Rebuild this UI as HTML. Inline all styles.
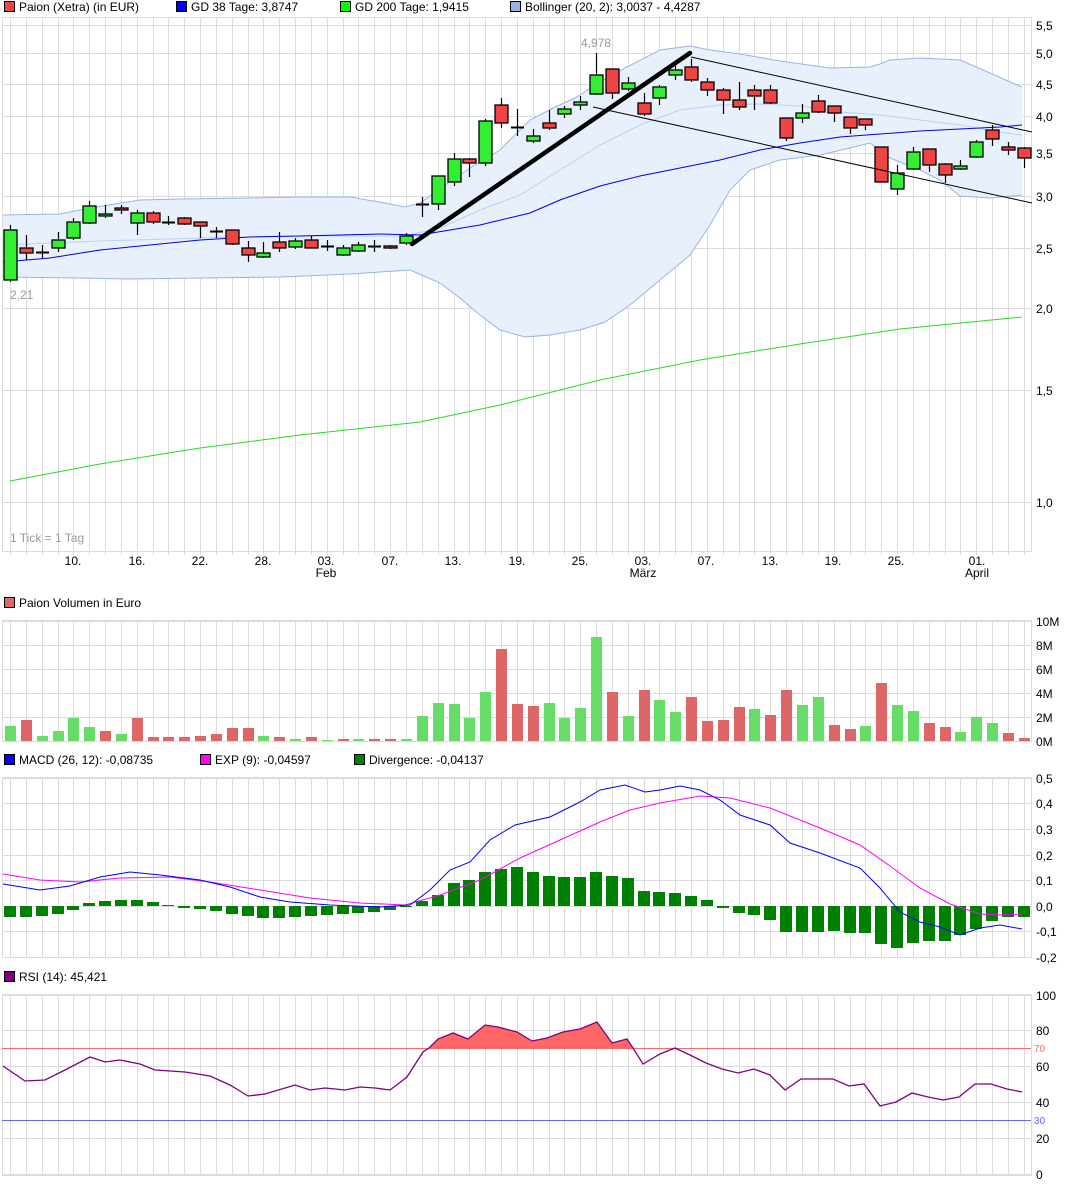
<!DOCTYPE html>
<html><head><meta charset="utf-8">
<style>
html,body{margin:0;padding:0;background:#fff;}
svg{display:block;font-family:"Liberation Sans",sans-serif;}
.t{font-size:12px;fill:#000;}
.a{font-size:12px;fill:#000;}
.g{font-size:12px;fill:#999;}
</style></head>
<body>
<svg id="s" width="1089" height="1188" viewBox="0 0 1089 1188" xmlns="http://www.w3.org/2000/svg">
<g id="grid"></g>
<g id="draw"></g>
<!-- legends -->
<rect x="4.5" y="1.5" width="10" height="10" fill="#ee4444" stroke="#000"/>
<text class="t" x="19" y="11">Paion (Xetra) (in EUR)</text>
<rect x="176.5" y="1.5" width="10" height="10" fill="#0000ff" stroke="#000"/>
<text class="t" x="191" y="11">GD 38 Tage: 3,8747</text>
<rect x="340.5" y="1.5" width="10" height="10" fill="#00ff00" stroke="#000"/>
<text class="t" x="355" y="11">GD 200 Tage: 1,9415</text>
<rect x="510.5" y="1.5" width="10" height="10" fill="#99b3e6" stroke="#000"/>
<text class="t" x="525" y="11">Bollinger (20, 2): 3,0037 - 4,4287</text>

<rect x="4.5" y="597.5" width="10" height="10" fill="#dd6666" stroke="#000"/>
<text class="t" x="19" y="607">Paion Volumen in Euro</text>

<rect x="4.5" y="754.5" width="10" height="10" fill="#0000ff" stroke="#000"/>
<text class="t" x="19" y="764">MACD (26, 12): -0,08735</text>
<rect x="200.5" y="754.5" width="10" height="10" fill="#ff00ff" stroke="#000"/>
<text class="t" x="215" y="764">EXP (9): -0,04597</text>
<rect x="354.5" y="754.5" width="10" height="10" fill="#008000" stroke="#000"/>
<text class="t" x="369" y="764">Divergence: -0,04137</text>

<rect x="4.5" y="971.5" width="10" height="10" fill="#800080" stroke="#000"/>
<text class="t" x="19" y="981">RSI (14): 45,421</text>

<!-- price axis -->
<text class="a" x="1036" y="30">5,5</text>
<text class="a" x="1036" y="58">5,0</text>
<text class="a" x="1036" y="89">4,5</text>
<text class="a" x="1036" y="121">4,0</text>
<text class="a" x="1036" y="158">3,5</text>
<text class="a" x="1036" y="201">3,0</text>
<text class="a" x="1036" y="253">2,5</text>
<text class="a" x="1036" y="313">2,0</text>
<text class="a" x="1036" y="395">1,5</text>
<text class="a" x="1036" y="507">1,0</text>
<text class="g" x="581" y="47">4,978</text>
<text class="g" x="10" y="299">2,21</text>
<text class="g" x="10" y="542">1 Tick = 1 Tag</text>
<!-- dates -->
<g class="a" text-anchor="middle">
<text class="a" x="73" y="565">10.</text>
<text class="a" x="137" y="565">16.</text>
<text class="a" x="200" y="565">22.</text>
<text class="a" x="263" y="565">28.</text>
<text class="a" x="326" y="565">03.</text>
<text class="a" x="326" y="577">Feb</text>
<text class="a" x="390" y="565">07.</text>
<text class="a" x="453" y="565">13.</text>
<text class="a" x="517" y="565">19.</text>
<text class="a" x="580" y="565">25.</text>
<text class="a" x="643" y="565">03.</text>
<text class="a" x="643" y="577">März</text>
<text class="a" x="706" y="565">07.</text>
<text class="a" x="770" y="565">13.</text>
<text class="a" x="833" y="565">19.</text>
<text class="a" x="896" y="565">25.</text>
<text class="a" x="977" y="565">01.</text>
<text class="a" x="977" y="577">April</text>
</g>
<!-- volume axis -->
<text class="a" x="1036" y="626">10M</text>
<text class="a" x="1036" y="650">8M</text>
<text class="a" x="1036" y="674">6M</text>
<text class="a" x="1036" y="698">4M</text>
<text class="a" x="1036" y="722">2M</text>
<text class="a" x="1036" y="746">0M</text>
<!-- macd axis -->
<text class="a" x="1036" y="783">0,5</text>
<text class="a" x="1036" y="808">0,4</text>
<text class="a" x="1036" y="834">0,3</text>
<text class="a" x="1036" y="860">0,2</text>
<text class="a" x="1036" y="885">0,1</text>
<text class="a" x="1036" y="911">0,0</text>
<text class="a" x="1036" y="936">-0,1</text>
<text class="a" x="1036" y="962">-0,2</text>
<!-- rsi axis -->
<text class="a" x="1036" y="1000">100</text>
<text class="a" x="1036" y="1035">80</text>
<text x="1034" y="1052" style="font-size:10px;fill:#ff6666">70</text>
<text class="a" x="1036" y="1071">60</text>
<text class="a" x="1036" y="1107">40</text>
<text x="1034" y="1124" style="font-size:10px;fill:#6666ff">30</text>
<text class="a" x="1036" y="1143">20</text>
<text class="a" x="1036" y="1179">0</text>
</svg>
<script>
var NS="http://www.w3.org/2000/svg";
var G=document.getElementById('grid'),D=document.getElementById('draw');
function el(p,tag,a){var e=document.createElementNS(NS,tag);for(var k in a)e.setAttribute(k,a[k]);p.appendChild(e);return e;}
function X(i){return 10+i*15.84;}
var L=2,R=1031;
var panels=[[17,551,[25,53,84,116,153,196,248,308,390,502]],[620,741,[621,645,669,693,717,741]],[777,957,[778,803,829,855,880,906,931,957]],[994,1175,[995,1030,1066,1102,1138,1174]]];
panels.forEach(function(p){
  for(var i=0;i<65;i++){var x=Math.round(X(i))+.5;el(G,'line',{x1:x,y1:p[0],x2:x,y2:p[1]+(p[0]==17?4:0),stroke:'#dcdcdc','stroke-width':1});}
  p[2].forEach(function(y){el(G,'line',{x1:L,y1:y+.5,x2:R,y2:y+.5,stroke:'#dcdcdc'});});
  el(G,'rect',{x:L+.5,y:p[0]+.5,width:R-L,height:p[1]-p[0],fill:'none',stroke:'#dcdcdc'});
});
function pl(pts,c,w,par){el(par||D,'polyline',{points:pts.map(function(p){return p.join(',')}).join(' '),fill:'none',stroke:c,'stroke-width':w||1});}
// bollinger
var up=[[3,215],[60,214],[90,208],[115,204],[140,200],[180,199],[250,198],[300,197],[350,197],[385,203],[405,207],[420,203],[445,185],[470,168],[500,150],[530,120],[555,107],[575,98],[600,82],[625,68],[660,50],[690,46],[710,50],[740,54],[780,61],[830,68],[870,67],[880,64],[890,60],[920,58],[960,60],[990,73],[1010,82],[1022,87]];
var lo=[[3,277],[80,278],[130,279],[200,278],[280,277],[350,274],[410,270],[440,283],[460,298],[480,315],[500,330],[525,337],[550,335],[580,330],[605,322],[630,305],[660,280],[690,255],[710,225],[730,190],[750,170],[780,160],[820,155],[850,148],[870,143],[890,158],[920,170],[940,180],[960,196],[990,198],[1022,195]];
el(D,'polygon',{points:up.concat(lo.slice().reverse()).map(function(p){return p.join(',')}).join(' '),fill:'#e8f0fc',stroke:'none'});
pl(up,'#99b3e6');pl(lo,'#99b3e6');
pl([[3,245],[100,241],[200,238],[300,236],[405,236],[440,228],[480,210],[520,195],[560,170],[600,145],[640,125],[680,110],[720,105],[760,104],[800,106],[840,112],[880,115],[920,120],[960,125],[1000,132],[1022,135]],'#b8d0f8');
pl([[3,262],[50,258],[100,250],[150,245],[200,240],[250,237],[300,236],[380,234],[420,235],[450,230],[480,225],[530,213],[560,200],[600,186],[640,176],[680,168],[720,160],[760,150],[800,143],[840,137],[880,134],[920,131],[960,129],[1000,127],[1022,125]],'#0000ee');
pl([[10,481],[100,464],[200,448],[300,435],[420,422],[500,405],[600,380],[700,360],[800,344],[900,329],[1022,317]],'#22dd22');
// candles [color, top, bottom, hi, lo]
var C=[['g',230,280,225,282],['r',248,253,235,260],['d',252,252,245,258],['g',240,248,232,252],['g',222,238,218,240],['g',206,223,201,224],['g',214,216,205,218],['r',208,210,205,214],['g',213,223,210,235],['r',213,222,211,224],['d',222,222,216,225],['r',218,224,217,225],['r',222,226,222,238],['d',231,231,227,238],['r',230,244,230,245],['r',248,255,241,262],['g',253,257,242,258],['r',242,248,232,252],['g',241,247,238,249],['r',240,248,236,248],['d',246,246,240,251],['g',248,255,245,256],['g',245,251,242,252],['d',246,246,240,252],['r',246,248,245,249],['g',236,243,233,245],['d',204,204,197,217],['g',176,204,176,210],['g',159,182,153,186],['r',159,163,158,177],['g',121,163,119,166],['r',105,123,98,128],['d',127,127,109,136],['g',136,141,129,143],['r',123,128,110,130],['g',109,114,106,118],['g',102,105,96,110],['g',75,94,53,95],['r',69,93,69,99],['g',83,89,77,91],['r',103,114,93,116],['g',87,98,85,105],['g',70,75,66,80],['r',67,80,59,82],['r',82,90,78,96],['r',90,100,88,114],['r',100,107,82,110],['r',90,96,85,110],['r',90,103,85,104],['r',118,138,118,141],['g',113,118,104,123],['r',101,112,95,113],['r',106,113,106,122],['r',117,128,117,134],['r',119,125,119,130],['r',147,182,147,182],['g',173,189,165,195],['g',152,169,147,170],['r',149,165,149,172],['r',164,175,163,183],['g',166,169,160,170],['g',142,157,140,158],['r',130,139,125,146],['r',147,150,142,155],['r',148,158,147,168]];
C.forEach(function(c,i){var x=Math.round(X(i));
  el(D,'line',{x1:x+.5,y1:c[3],x2:x+.5,y2:c[4],stroke:'#000','stroke-width':1.2});
  if(c[0]=='d'){el(D,'line',{x1:x-6,y1:c[1]+.5,x2:x+7,y2:c[1]+.5,stroke:'#000','stroke-width':2});}
  else el(D,'rect',{x:x-6,y:c[1],width:13,height:Math.max(2,c[2]-c[1]),fill:c[0]=='g'?'#33ee33':'#ee4444',stroke:'#000','stroke-width':1.3});
});
// trend lines
el(D,'line',{x1:412,y1:244,x2:690,y2:53,stroke:'#000','stroke-width':4.5,'stroke-linecap':'round'});
el(D,'line',{x1:691,y1:57,x2:1032,y2:132,stroke:'#000','stroke-width':1});
el(D,'line',{x1:593,y1:107,x2:1032,y2:203,stroke:'#000','stroke-width':1});
// volume
var V=[['g',15],['r',21],['g',5],['g',10],['g',23],['g',14],['r',10],['g',7],['r',23],['r',4],['r',4],['r',4],['r',5],['r',7],['r',13],['r',13],['g',5],['r',4],['g',2],['r',4],['g',1],['r',2],['g',2],['r',2],['r',2],['g',2],['g',25],['g',38],['g',37],['g',23],['g',49],['r',92],['r',37],['r',35],['g',38],['g',23],['g',33],['g',104],['r',49],['g',25],['r',51],['g',41],['g',29],['r',44],['r',20],['r',21],['r',34],['g',32],['r',26],['r',51],['g',36],['g',44],['r',16],['r',12],['g',15],['r',58],['g',36],['g',30],['r',18],['r',14],['g',9],['g',24],['g',18],['r',8],['r',3]];
V.forEach(function(v,i){var x=Math.round(X(i));el(D,'rect',{x:x-5,y:741-v[1],width:11,height:v[1],fill:v[0]=='g'?'#66dd66':'#dd6666'});});
// macd divergence
var M=[917,917,916,914,910,903,901,900,900,902,905,908,909,911,914,916,918,918,917,916,915,914,913,912,910,906,901,895,883,880,872,869,867,872,876,877,877,872,876,878,891,892,893,896,900,908,913,915,920,932,932,932,931,933,933,944,948,943,941,941,935,929,921,917,917];
M.forEach(function(y,i){var x=Math.round(X(i));var t=Math.min(y,906),b=Math.max(y,906);el(D,'rect',{x:x-6,y:t,width:12,height:Math.max(1,b-t),fill:'#008000'});});
pl([[3,874],[40,880],[80,882],[120,878],[170,877],[210,882],[260,890],[310,898],[360,903],[405,905],[440,895],[480,880],[520,858],[560,840],[600,822],[630,810],[660,803],[700,796],[730,798],[770,808],[820,828],[860,845],[890,866],[920,888],[950,904],[980,914],[1000,915],[1022,914]],'#ff00ff');
pl([[3,884],[40,890],[70,886],[100,877],[130,872],[160,875],[200,880],[230,887],[260,897],[290,902],[330,905],[380,907],[410,905],[430,890],[450,870],[470,862],[490,840],[515,825],[550,817],[580,802],[600,790],[625,785],[645,792],[660,790],[680,786],[700,790],[720,800],[740,815],[770,825],[790,843],[820,853],[860,868],[880,888],[900,912],[920,922],[940,927],[960,935],[980,928],[1000,925],[1022,929]],'#0000ff');
// rsi
var RS=[[3,1066],[25,1081],[45,1080],[65,1070],[90,1057],[105,1062],[120,1060],[140,1064],[155,1070],[185,1072],[210,1076],[230,1085],[248,1096],[265,1094],[295,1085],[310,1090],[325,1088],[345,1090],[360,1087],[375,1088],[390,1090],[407,1077],[423,1052],[429,1048],[438,1039],[453,1033],[468,1039],[485,1025],[498,1027],[517,1032],[532,1041],[547,1038],[563,1032],[580,1029],[597,1022],[612,1043],[627,1039],[633,1048],[643,1064],[660,1054],[675,1048],[690,1055],[706,1063],[722,1069],[738,1073],[754,1069],[770,1075],[785,1090],[801,1079],[817,1079],[833,1079],[849,1086],[864,1084],[880,1106],[896,1102],[912,1093],[928,1097],[943,1100],[959,1097],[975,1084],[991,1084],[1007,1089],[1022,1092]];
var f=RS.filter(function(p){return p[0]>=429&&p[0]<=633;});
el(D,'polygon',{points:f.map(function(p){return p.join(',')}).join(' '),fill:'#ff6666'});
el(D,'line',{x1:L,y1:1048.5,x2:R,y2:1048.5,stroke:'#ff6666'});
el(D,'line',{x1:L,y1:1120.5,x2:R,y2:1120.5,stroke:'#6666ff'});
pl(RS,'#800080',1.3);
</script>
</body></html>
